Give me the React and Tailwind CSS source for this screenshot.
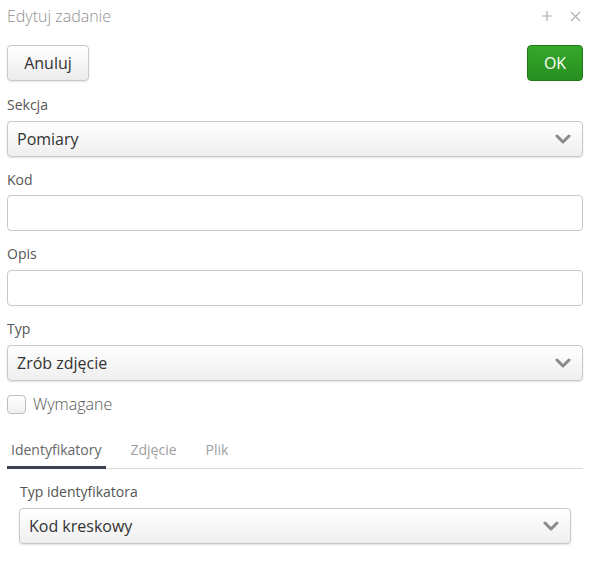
import React from 'react';

const Chevron = () => (
  <svg width="16" height="10" viewBox="0 0 16 10" className="text-[#8a8a8a]">
    <path d="M2 2 L8 8 L14 2" fill="none" stroke="currentColor" strokeWidth="3" strokeLinecap="round" strokeLinejoin="round" />
  </svg>
);

const Label = ({ children, className = '' }) => (
  <div className={`text-[14px] leading-5 text-[#555] ${className}`}>{children}</div>
);

const Select = ({ value }) => (
  <div className="flex h-9 items-center justify-between rounded-[4px] border border-[#c8c8c8] bg-gradient-to-b from-white to-[#efefef] pl-[9px] pr-[11px] shadow-[0_1px_2px_rgba(0,0,0,0.12)]">
    <span className="text-[16px] text-[#333]">{value}</span>
    <Chevron />
  </div>
);

const Input = () => (
  <div className="h-9 rounded-[4px] border border-[#c8c8c8] bg-white" />
);

export default function App() {
  const tabs = ['Identyfikatory', 'Zdjęcie', 'Plik'];

  return (
    <div className="w-[592px] h-[564px] bg-white pl-[7px] pr-[9px] font-['Open_Sans',sans-serif]">
      <div className="flex h-[32px] items-center justify-between">
        <span className="text-[16px] font-light text-[#8f8f8f]">Edytuj zadanie</span>
        <div className="flex items-center gap-[17px] pr-[2px] text-[#b0b0b0]">
          <svg width="12" height="12" viewBox="0 0 12 12">
            <path d="M6 1 V11 M1 6 H11" stroke="currentColor" strokeWidth="1.2" />
          </svg>
          <svg width="11" height="11" viewBox="0 0 11 11">
            <path d="M1 1 L10 10 M10 1 L1 10" stroke="currentColor" strokeWidth="1.2" />
          </svg>
        </div>
      </div>

      <div className="mt-[13px] flex items-center justify-between">
        <button className="h-9 w-[82px] rounded-[4px] border border-[#c8c8c8] bg-gradient-to-b from-white to-[#ececec] text-[16px] text-[#333] shadow-[0_1px_2px_rgba(0,0,0,0.1)]">
          Anuluj
        </button>
        <button className="h-9 w-[56px] rounded-[4px] border border-[#1f7a18] bg-gradient-to-b from-[#35a82b] to-[#278f1f] text-[16px] text-white">
          OK
        </button>
      </div>

      <Label className="mt-[14px] mb-[6px]">Sekcja</Label>
      <Select value="Pomiary" />

      <Label className="mt-[13px] mb-[5px]">Kod</Label>
      <Input />

      <Label className="mt-[13px] mb-[6px]">Opis</Label>
      <Input />

      <Label className="mt-[13px] mb-[6px]">Typ</Label>
      <Select value="Zrób zdjęcie" />

      <div className="mt-[11px] flex items-center gap-[7px]">
        <div className="h-[19px] w-[19px] rounded-[4px] border border-[#bdbdbd] bg-gradient-to-b from-white to-[#f0f0f0]" />
        <span className="text-[16px] font-light text-[#555]">Wymagane</span>
      </div>

      <div className="mt-[24px] flex gap-5 border-b border-[#dcdcdc]">
        {tabs.map((t, i) => (
          <div
            key={t}
            className={`-mb-px pl-1 pr-[5px] pb-[6px] text-[14px] leading-5 ${
              i === 0 ? 'border-b-[3px] border-[#3d4050] text-[#666]' : 'border-b-[3px] border-transparent text-[#a0a0a0]'
            }`}
          >
            {t}
          </div>
        ))}
      </div>

      <div className="px-3">
        <Label className="mt-[13px] mb-[6px] pl-px">Typ identyfikatora</Label>
        <Select value="Kod kreskowy" />
      </div>
    </div>
  );
}
